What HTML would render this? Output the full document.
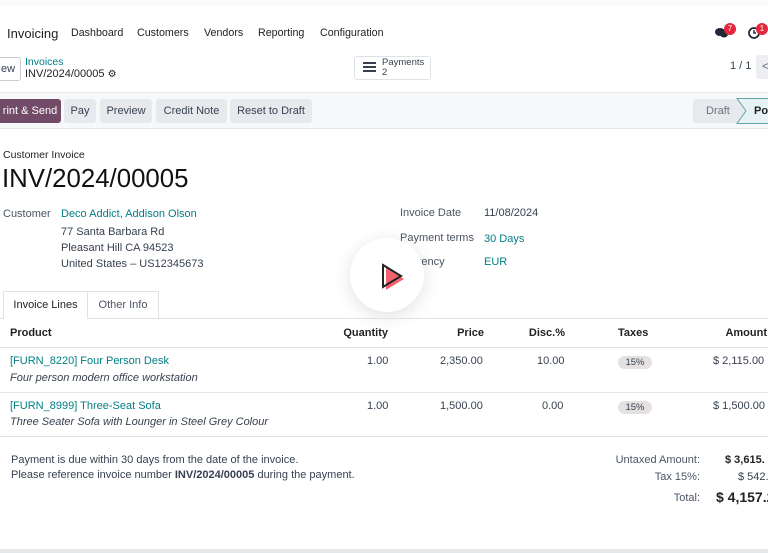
<!DOCTYPE html>
<html><head><meta charset="utf-8"><style>
*{margin:0;padding:0;box-sizing:border-box}
body{width:768px;height:553px;overflow:hidden;background:#fff;font-family:"Liberation Sans",sans-serif;color:#374151;font-size:11px;position:relative}
.a{position:absolute;white-space:nowrap}
.t{color:#017e84}
.btn{position:absolute;top:99px;height:24px;background:#e7e9ed;border-radius:3px;font-size:11px;line-height:24px;text-align:center;color:#374151}
.r{text-align:right}
</style></head><body>
<div class="a" style="left:0;top:0;width:768px;height:6px;background:#fbfbfb"></div>
<div class="a" style="left:7px;top:26px;font-size:13px;color:#222">Invoicing</div>
<div class="a" style="left:71px;top:27px;color:#222;font-size:10.7px">Dashboard</div>
<div class="a" style="left:137px;top:27px;color:#222;font-size:10.7px">Customers</div>
<div class="a" style="left:204px;top:27px;color:#222;font-size:10.7px">Vendors</div>
<div class="a" style="left:258px;top:27px;color:#222;font-size:10.7px">Reporting</div>
<div class="a" style="left:320px;top:27px;color:#222;font-size:10.7px">Configuration</div>
<svg class="a" style="left:714px;top:27px" width="16" height="12"><ellipse cx="6" cy="5" rx="5" ry="4" fill="#1f2937"/><ellipse cx="10" cy="7" rx="4" ry="3.5" fill="#1f2937"/></svg>
<div class="a" style="left:724px;top:23px;width:12px;height:12px;border-radius:6px;background:#e3283d;color:#fff;font-size:8px;line-height:12px;text-align:center">7</div>
<svg class="a" style="left:747px;top:26px" width="14" height="14"><circle cx="7" cy="7" r="5" fill="none" stroke="#1f2937" stroke-width="1.8"/><path d="M7 4v3h2" stroke="#1f2937" stroke-width="1.4" fill="none"/></svg>
<div class="a" style="left:756px;top:23px;width:12px;height:12px;border-radius:6px;background:#e3283d;color:#fff;font-size:8px;line-height:12px;text-align:center">1</div>

<div class="a" style="left:-10px;top:57px;width:31px;height:24px;border:1px solid #c9ccd1;border-radius:3px;background:#fff;font-size:11px;line-height:22px;padding-left:10px;color:#374151">ew</div>
<div class="a t" style="left:25px;top:56px;font-size:10.5px">Invoices</div>
<div class="a" style="left:25px;top:68px;font-size:11px;color:#222">INV/2024/00005 <span style="font-size:10px">&#9881;</span></div>
<div class="a" style="left:354px;top:56px;width:77px;height:24px;border:1px solid #dee2e6;border-radius:3px"></div>
<div class="a" style="left:363px;top:62px;width:13px;height:2px;background:#374151;box-shadow:0 4px 0 #374151,0 8px 0 #374151"></div>
<div class="a" style="left:382px;top:58px;font-size:9.5px;line-height:10px;color:#374151">Payments<br>2</div>
<div class="a" style="left:730px;top:60px;font-size:11px;color:#374151">1 / 1</div>
<div class="a" style="left:756px;top:55px;width:20px;height:24px;background:#eceef1;border-radius:3px;color:#6b7280;font-size:12px;line-height:22px;padding-left:6px">&lt;</div>

<div class="a" style="left:0;top:92px;width:768px;height:37px;background:#f7f8fa;border-top:1px solid #e5e7eb;border-bottom:1px solid #e5e7eb"></div>
<div class="btn" style="left:-5px;width:66px;background:#714b67;color:#fff;padding-left:4px">rint &amp; Send</div>
<div class="btn" style="left:64px;width:32px">Pay</div>
<div class="btn" style="left:100px;width:52px">Preview</div>
<div class="btn" style="left:156px;width:71px">Credit Note</div>
<div class="btn" style="left:230px;width:82px">Reset to Draft</div>
<div class="btn" style="left:693px;width:52px;color:#6b7280;text-align:left;padding-left:13px">Draft</div>
<svg class="a" style="left:735px;top:98px" width="40" height="26"><path d="M2 0.5H40V25.5H2L11 13Z" fill="#e6f2f3" stroke="#5fa5a9"/></svg>
<div class="a" style="left:754px;top:105px;font-weight:bold;color:#222">Pos</div>

<div class="a" style="left:3px;top:149px;font-size:10.5px;color:#222">Customer Invoice</div>
<div class="a" style="left:2px;top:165px;font-size:25.8px;color:#111">INV/2024/00005</div>
<div class="a" style="left:3px;top:208px;color:#4b5563">Customer</div>
<div class="a t" style="left:61px;top:208px">Deco Addict, Addison Olson</div>
<div class="a" style="left:61px;top:224px;line-height:16px">77 Santa Barbara Rd<br>Pleasant Hill CA 94523<br>United States – US12345673</div>
<div class="a" style="left:400px;top:207px;color:#4b5563">Invoice Date</div>
<div class="a" style="left:484px;top:207px">11/08/2024</div>
<div class="a" style="left:400px;top:232px;color:#4b5563">Payment terms</div>
<div class="a t" style="left:484px;top:233px">30 Days</div>
<div class="a" style="left:400px;top:256px;color:#4b5563">Currency</div>
<div class="a t" style="left:484px;top:256px">EUR</div>

<div class="a" style="left:350px;top:238px;width:74px;height:74px;border-radius:37px;background:#fff;box-shadow:0 4px 18px rgba(0,0,0,.12)"></div>
<svg class="a" style="left:378px;top:262px" width="30" height="30"><path d="M6 4L24 15L6 26Z" fill="#f1636d" transform="translate(2,2)"/><path d="M5 3L23 14L5 25Z" fill="none" stroke="#222" stroke-width="2"/></svg>

<div class="a" style="left:0;top:318px;width:768px;height:1px;background:#dee2e6"></div>
<div class="a" style="left:3px;top:291px;width:85px;height:28px;border:1px solid #dee2e6;border-bottom:none;background:#fff;line-height:27px;text-align:center;color:#222">Invoice Lines</div>
<div class="a" style="left:88px;top:291px;width:71px;height:27px;border:1px solid #dee2e6;border-bottom:none;border-left:none;line-height:27px;text-align:center;color:#4b5563">Other Info</div>

<div class="a" style="left:10px;top:327px;font-weight:bold;color:#222">Product</div>
<div class="a r" style="left:300px;width:88px;top:327px;font-weight:bold;color:#222">Quantity</div>
<div class="a r" style="left:400px;width:84px;top:327px;font-weight:bold;color:#222">Price</div>
<div class="a r" style="left:480px;width:85px;top:327px;font-weight:bold;color:#222">Disc.%</div>
<div class="a" style="left:618px;top:327px;font-weight:bold;color:#222">Taxes</div>
<div class="a r" style="left:680px;width:87px;top:327px;font-weight:bold;color:#222">Amount</div>
<div class="a" style="left:0;top:347px;width:768px;height:1px;background:#dee2e6"></div>

<div class="a t" style="left:10px;top:355px">[FURN_8220] Four Person Desk</div>
<div class="a" style="left:10px;top:372px;font-style:italic">Four person modern office workstation</div>
<div class="a" style="left:367px;top:355px">1.00</div>
<div class="a" style="left:440px;top:355px">2,350.00</div>
<div class="a" style="left:537px;top:355px">10.00</div>
<div class="a" style="left:618px;top:356px;width:34px;height:13px;background:#e5e1e1;border-radius:7px;font-size:9.5px;line-height:13px;text-align:center">15%</div>
<div class="a" style="left:713px;top:355px">$ 2,115.00</div>
<div class="a" style="left:0;top:392px;width:768px;height:1px;background:#e5e7eb"></div>

<div class="a t" style="left:10px;top:400px">[FURN_8999] Three-Seat Sofa</div>
<div class="a" style="left:10px;top:416px;font-style:italic">Three Seater Sofa with Lounger in Steel Grey Colour</div>
<div class="a" style="left:367px;top:400px">1.00</div>
<div class="a" style="left:440px;top:400px">1,500.00</div>
<div class="a" style="left:542px;top:400px">0.00</div>
<div class="a" style="left:618px;top:401px;width:34px;height:13px;background:#e5e1e1;border-radius:7px;font-size:9.5px;line-height:13px;text-align:center">15%</div>
<div class="a" style="left:713px;top:400px">$ 1,500.00</div>
<div class="a" style="left:0;top:436px;width:768px;height:1px;background:#dee2e6"></div>

<div class="a" style="left:11px;top:453px;line-height:15px">Payment is due within 30 days from the date of the invoice.<br>Please reference invoice number <b>INV/2024/00005</b> during the payment.</div>
<div class="a r" style="left:600px;top:454px;width:100px;color:#4b5563">Untaxed Amount:</div>
<div class="a" style="left:725px;top:454px;font-weight:bold;color:#222">$ 3,615.</div>
<div class="a r" style="left:600px;top:471px;width:100px;color:#4b5563">Tax 15%:</div>
<div class="a" style="left:738px;top:471px">$ 542.</div>
<div class="a r" style="left:600px;top:492px;width:100px;color:#4b5563">Total:</div>
<div class="a" style="left:716px;top:489px;font-size:14px;font-weight:bold;color:#222">$ 4,157.2</div>
<div class="a" style="left:0;top:549px;width:768px;height:4px;background:#e5e7eb"></div>
</body></html>
